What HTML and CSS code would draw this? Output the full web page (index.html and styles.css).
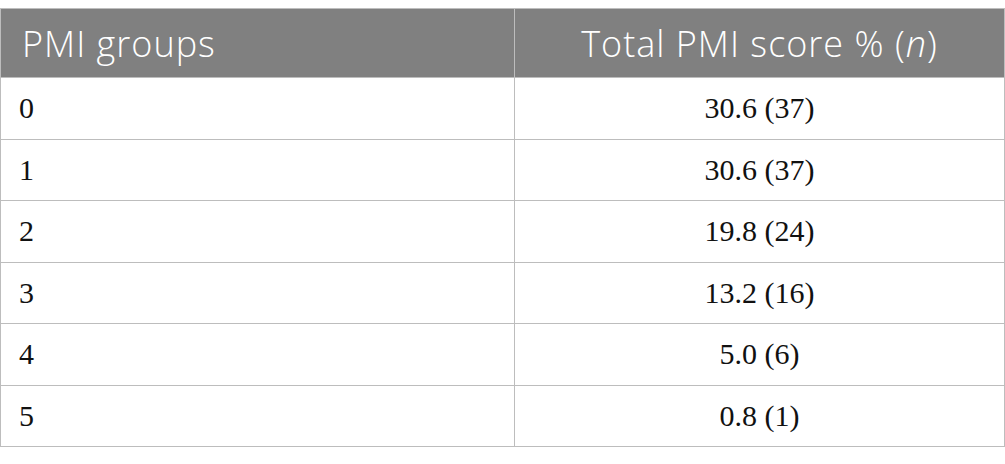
FILE: index.html
```html
<!DOCTYPE html>
<html>
<head>
<meta charset="utf-8">
<link rel="stylesheet" href="styles.css">
</head>
<body>
<table class="data">
  <thead>
    <tr><th class="c1">PMI groups</th><th class="c2">Total PMI score % (<i>n</i>)</th></tr>
  </thead>
  <tbody>
    <tr><td class="c1">0</td><td class="c2">30.6 (37)</td></tr>
    <tr><td class="c1">1</td><td class="c2">30.6 (37)</td></tr>
    <tr><td class="c1">2</td><td class="c2">19.8 (24)</td></tr>
    <tr><td class="c1">3</td><td class="c2">13.2 (16)</td></tr>
    <tr><td class="c1">4</td><td class="c2">5.0 (6)</td></tr>
    <tr><td class="c1">5</td><td class="c2">0.8 (1)</td></tr>
  </tbody>
</table>
</body>
</html>
```
FILE: styles.css
```css
html, body {
  margin: 0;
  padding: 0;
  background: #ffffff;
}
body {
  padding-top: 8px;
}
.data {
  width: 1005px;
  border-collapse: collapse;
  table-layout: fixed;
}
.data th, .data td {
  border: 1px solid #bdbdbd;
  padding: 0 20px;
}
.data th {
  background: #808080;
  color: #ffffff;
  font-family: "Open Sans", sans-serif;
  font-weight: 300;
  font-size: 36px;
  letter-spacing: 1px;
  height: 68px;
  text-align: left;
}
.data td {
  font-family: "Liberation Serif", serif;
  font-size: 30px;
  color: #111111;
  height: 60.5px;
}
.c1 { width: 514px; box-sizing: border-box; }
.data th.c1 { padding-left: 21px; }
.data td.c1 { padding-left: 18px; }
.data .c2 { text-align: center; }
```
